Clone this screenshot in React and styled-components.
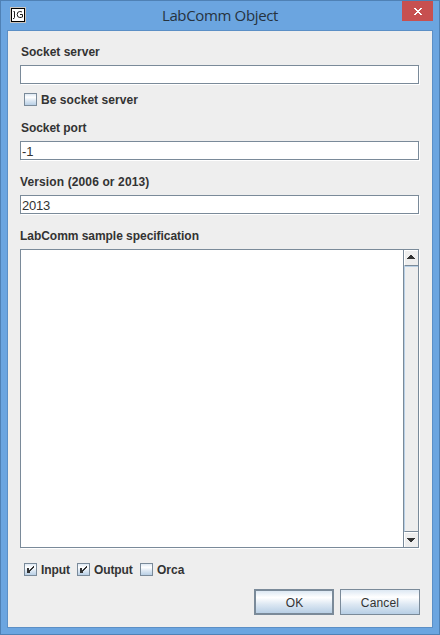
import React from "react";
import styled, { createGlobalStyle } from "styled-components";

const Global = createGlobalStyle`
  * { box-sizing: border-box; }
  body { margin: 0; background: #6ba5e0; }
`;

const steel = "#7a8a99";
const metal =
  "linear-gradient(to bottom, #dde8f3 0%, #ffffff 30%, #dde8f3 60%, #b8cfe5 100%)";

const Window = styled.div`
  width: 440px;
  height: 635px;
  display: flex;
  flex-direction: column;
  background: #6ba5e0;
  border: 1px solid #4f81b5;
  padding: 0 6px 6px;
  font-family: "Liberation Sans", Arial, sans-serif;
  font-size: 12px;
  color: #333333;
`;

const TitleBar = styled.header`
  flex: none;
  height: 29px;
  display: grid;
  grid-template-columns: 31px 1fr 31px;
  align-items: start;
`;

const AppIcon = styled.svg`
  display: block;
  margin: 6px 0 0 3px;
`;

const Title = styled.h1`
  margin: 4px 0 0;
  font: 400 15px/21px "Open Sans", "Noto Sans", sans-serif;
  letter-spacing: -0.35px;
  text-align: center;
  white-space: nowrap;
  color: #26333f;
`;

const CloseButton = styled.button`
  width: 31px;
  height: 20px;
  padding: 0;
  border: 0;
  background: #c75050;
  display: block;
`;

const Panel = styled.main`
  flex: 1;
  background: #eeeeee;
  border: 1px solid #5b8fc6;
  padding: 11px 11px 0 12px;
`;

const Label = styled.label`
  display: block;
  height: 20px;
  margin-top: ${(p) => p.$gap || 0}px;
  padding-left: ${(p) => p.$indent || 0}px;
  font-weight: 700;
  line-height: 20px;
  white-space: nowrap;
  letter-spacing: ${(p) => p.$spacing || 0}px;
`;

const Field = styled.input`
  display: block;
  width: 399px;
  height: 19px;
  margin: 3px 0 0;
  padding: 1px 0 0 1px;
  border: 1px solid ${steel};
  border-radius: 0;
  outline: 0;
  background: #ffffff;
  box-shadow: 1px 1px 0 #ffffff;
  font: 13px/15px "Liberation Sans", Arial, sans-serif;
  letter-spacing: -0.2px;
  color: #333333;
`;

const CheckRow = styled.div`
  display: flex;
  margin-top: ${(p) => p.$gap}px;
  padding-left: 4px;
`;

const CheckItem = styled.label`
  display: flex;
  gap: 4px;
  width: ${(p) => p.$width}px;
  height: 13px;
  font-weight: 700;
  line-height: 15px;
  white-space: nowrap;
  letter-spacing: ${(p) => p.$spacing || 0}px;
`;

const CheckBox = styled.span`
  flex: none;
  width: 13px;
  height: 13px;
  border: 1px solid ${steel};
  background: ${metal};
`;

const Tick = styled.svg`
  display: block;
`;

const TextPane = styled.div`
  display: flex;
  width: 399px;
  height: 299px;
  margin-top: 3px;
  border: 1px solid ${steel};
  background: #ffffff;
  box-shadow: 1px 1px 0 #ffffff;
`;

const TextBody = styled.div`
  flex: 1;
`;

const ScrollBar = styled.div`
  width: 15px;
  display: flex;
  flex-direction: column;
  border-left: 1px solid ${steel};
`;

const Arrow = styled.div`
  height: ${(p) => (p.$down ? 15 : 16)}px;
  padding: ${(p) => (p.$down ? 5 : 4)}px 0 0 2px;
  background: #eeeeee;
  border-top: 1px solid #ffffff;
  border-left: 1px solid #ffffff;
  border-bottom: ${(p) => (p.$down ? "0" : `1px solid ${steel}`)};
`;

const Thumb = styled.div`
  flex: 1;
  background: #eeeeee;
  border-top: 1px solid #b8cfe5;
  border-left: 1px solid #b8cfe5;
  border-bottom: 1px solid ${steel};
`;

const Actions = styled.div`
  display: flex;
  justify-content: flex-end;
  gap: 6px;
  margin-top: 13px;
  padding-right: 1px;
`;

const Button = styled.button`
  width: 80px;
  height: 26px;
  padding: 2px 0 0 ${(p) => (p.$default ? 1 : 0)}px;
  border: ${(p) => (p.$default ? 2 : 1)}px solid ${steel};
  border-radius: 0;
  background: ${metal};
  font: 12px/14px "Liberation Sans", Arial, sans-serif;
  letter-spacing: ${(p) => p.$spacing || 0}px;
  color: #333333;
`;

function Check({ label, checked, width, spacing }) {
  return (
    <CheckItem $width={width} $spacing={spacing}>
      <CheckBox role="checkbox" aria-checked={!!checked}>
        {checked && (
          <Tick width="11" height="11" viewBox="0 0 11 11" shapeRendering="crispEdges">
            <path
              fill="#333333"
              d="M2 4h2v5h-2zM4 6h1v3h-1zM5 5h1v2h-1zM6 4h1v2h-1zM7 3h1v2h-1zM8 2h1v2h-1z"
            />
          </Tick>
        )}
      </CheckBox>
      {label}
    </CheckItem>
  );
}

export default function App() {
  return (
    <>
      <Global />
      <Window>
        <TitleBar>
          <AppIcon width="16" height="16" viewBox="0 0 16 16">
            <path fill="#c9c4be" d="M0 0h16v16H0z" />
            <path fill="#000000" d="M1 1h14v14H1z" />
            <path fill="#ffffff" d="M2 2h12v12H2z" />
            <path
              fill="none"
              stroke="#1c1c1c"
              strokeWidth="1"
              d="M3.5 4.5H4.5V10.5Q4.5 11.6 3 11.7M12 5Q11 4.5 9.8 4.5Q7.2 4.5 7.2 7.5Q7.2 10.5 9.8 10.5Q11.3 10.5 12.5 10V7.5H10"
            />
          </AppIcon>
          <Title>LabComm Object</Title>
          <CloseButton aria-label="Close">
            <svg width="31" height="20" viewBox="0 0 31 20" shapeRendering="crispEdges">
              <path
                fill="#ffffff"
                d="M12 7h2v1h-2zM18 7h2v1h-2zM13 8h2v1h-2zM17 8h2v1h-2zM14 9h4v1h-4zM15 10h2v1h-2zM14 11h4v1h-4zM13 12h2v1h-2zM17 12h2v1h-2zM12 13h2v1h-2zM18 13h2v1h-2z"
              />
            </svg>
          </CloseButton>
        </TitleBar>
        <Panel>
          <Label $indent={1}>Socket server</Label>
          <Field defaultValue="" />
          <CheckRow $gap={9}>
            <Check label="Be socket server" spacing={0.05} />
          </CheckRow>
          <Label $gap={12} $indent={1} $spacing={-0.05}>Socket port</Label>
          <Field defaultValue="-1" />
          <Label $gap={12} $spacing={0.12}>Version (2006 or 2013)</Label>
          <Field defaultValue="2013" />
          <Label $gap={12} $spacing={-0.04}>LabComm sample specification</Label>
          <TextPane>
            <TextBody />
            <ScrollBar>
              <Arrow>
                <svg width="8" height="4" viewBox="0 0 8 4" shapeRendering="crispEdges" display="block">
                  <path fill="#333333" d="M3 0h2v1h1v1h1v1h1v1H0V3h1V2h1V1h1z" />
                </svg>
              </Arrow>
              <Thumb />
              <Arrow $down>
                <svg width="8" height="4" viewBox="0 0 8 4" shapeRendering="crispEdges" display="block">
                  <path fill="#333333" d="M0 0h8v1H7v1H6v1H5v1H3V3H2V2H1V1H0z" />
                </svg>
              </Arrow>
            </ScrollBar>
          </TextPane>
          <CheckRow $gap={15}>
            <Check label="Input" checked width={53} spacing={-0.1} />
            <Check label="Output" checked width={63} spacing={-0.1} />
            <Check label="Orca" />
          </CheckRow>
          <Actions>
            <Button $default>OK</Button>
            <Button $spacing={0.15}>Cancel</Button>
          </Actions>
        </Panel>
      </Window>
    </>
  );
}
